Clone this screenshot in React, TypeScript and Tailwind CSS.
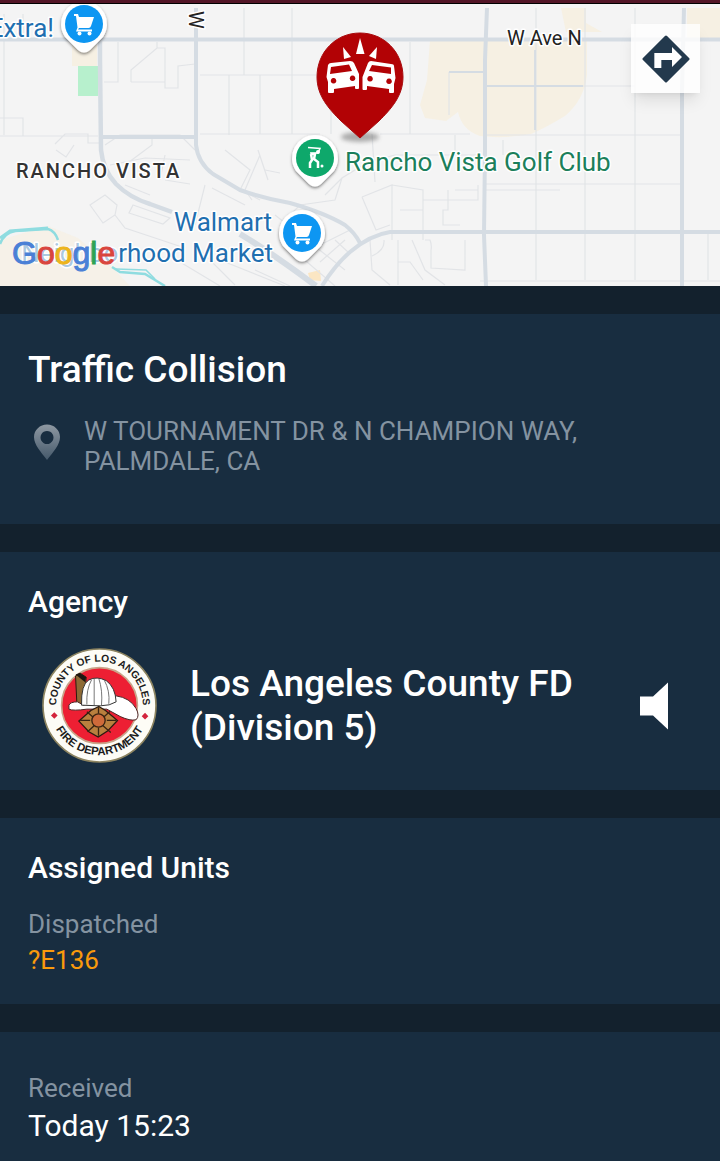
import type { ReactNode } from "react";

const incident = {
  type: "Traffic Collision",
  address: ["W TOURNAMENT DR & N CHAMPION WAY,", "PALMDALE, CA"],
  agency: ["Los Angeles County FD", "(Division 5)"],
  units: [{ status: "Dispatched", names: "?E136" }],
  received: "Today 15:23",
};

// teardrop marker used for the places on the map
function PlacePin({ x, y, color, children }: { x: number; y: number; color: string; children: ReactNode }) {
  return (
    <g transform={`translate(${x} ${y})`}>
      <path
        d="M0 -23A23 23 0 0 1 19 13L6 26Q0 31 -6 26L-19 13A23 23 0 0 1 0 -23Z"
        fill="#fff"
        filter="url(#pinShadow)"
      />
      <circle r="19" fill={color} />
      {children}
    </g>
  );
}

function Cart() {
  return (
    <g fill="#fff">
      <path d="M-10 -10H-6L-5 -7H10L7 2Q6.500 4 4.500 4H-5L-6 5.500H8V7.500H-8L-6.500 3.500L-8 -8H-10Z" />
      <circle cx="-4.500" cy="9.500" r="2" />
      <circle cx="5.500" cy="9.500" r="2" />
    </g>
  );
}

function CollisionPin() {
  return (
    <g>
      <ellipse cx="360" cy="137" rx="19" ry="5" fill="#555" opacity="0.45" filter="url(#soft)" />
      <path
        d="M360 33C384 33 403 52 403 77C403 96 391 109 379 121L360 138L341 121C329 109 317 96 317 77C317 52 336 33 360 33Z"
        fill="#b20205"
        stroke="#a80a0d"
        strokeWidth="1"
      />
      <g fill="#fff">
        <path d="M360 38L364.500 54H356Z" />
        <path d="M343 47L351 57L344 59Z" />
        <path d="M377 47L376 59L369 56Z" />
        <path
          fillRule="evenodd"
          d="M328 65Q329 63 331 63L350 61Q353 61 354 63L359 74V88Q359 89 358 89H356Q355 89 355 88V86L334 89V92Q334 93 333 93H329Q328 93 328 92V82L326.500 77ZM331 67L330 74L352 71L349 64.500ZM333.500 78A2.800 2.800 0 1 0 333.600 78ZM352.500 75.500A2.800 2.800 0 1 0 352.600 75.500Z"
        />
        <path
          fillRule="evenodd"
          d="M368 63Q369 61 371 61L391 64Q394 64 394 66L395.500 78L394 84V92Q394 93 393 93H390Q389 93 389 92V89L367 86V89Q367 90 366 90H363.500Q362.500 90 362.500 89V77ZM372 65L369 71L391 74V67.500ZM370 76A2.800 2.800 0 1 0 370.100 76ZM389 78.500A2.800 2.800 0 1 0 389.100 78.500Z"
        />
      </g>
    </g>
  );
}

function IncidentMap() {
  return (
    <svg viewBox="0 4 720 282" className="block h-auto w-full font-[Roboto,sans-serif]" role="img" aria-label="Map">
      <defs>
        <filter id="pinShadow" x="-30%" y="-30%" width="160%" height="160%">
          <feDropShadow dx="0" dy="1.500" stdDeviation="1.500" floodOpacity="0.5" />
        </filter>
        <filter id="soft" x="-30%" y="-80%" width="160%" height="260%">
          <feGaussianBlur stdDeviation="2" />
        </filter>
      </defs>
      <rect y="4" width="720" height="282" fill="#f4f4f4" />

      {/* land use */}
      <g fill="#f6f0e3">
        <path d="M430 40H587V75Q584 100 565 116Q545 128 531 134Q505 139 480 136Q462 130 458 112L446 121L425 118L420 105L427 80Z" />
        <path d="M561 8H586V23L602 32H566Z" />
        <path d="M687 8H720V38H687Z" />
        <path d="M72 45H97V66H72Z" />
        <path d="M0 240L48 226L78 238L110 265L130 286H0Z" opacity="0.7" />
        <path d="M308 273L320 270L321 281L310 280Z" fill="#fbe6c3" />
      </g>
      <path d="M78 66H98V96H78Z" fill="#b7f0cd" />

      {/* minor streets */}
      <g fill="none" stroke="#e2e4e7" strokeWidth="1.200">
        <path d="M4 14V135M23 14V40M0 118H23V136H0M0 136H98M55 144L65 134H88V143H100" />
        <path d="M104 82H118V42M131 82V70L157 48H165V82H131M165 82V88H178V66L195 64M157 48V42" />
        <path d="M200 75H318M229 75V135M244 8V75M260 75V134M292 8V134M331 110V134M200 134H320M410 42V134M380 134H470" />
        <path d="M450 72L485 72M449 72V115M536 8V280M585 8V280M635 8V280M485 86H635M485 135H680M485 184H680M485 190H560M480 281H720M708 233V280" />
        <path d="M105 145L120 135H180L195 150M110 165L145 158L190 160M125 165L152 145V135M160 180L165 155M165 180L190 184" />
        <path d="M90 205L105 195L117 205L115 215L103 223ZM115 215L125 228L185 248M133 205L170 218L163 224L129 213ZM150 195L125 185" />
        <path d="M205 185L195 225M212 188L245 205M218 178L260 200M225 150L250 170L240 190M260 155L245 190L252 200M258 150L268 180" />
        <path d="M290 215L300 205L335 200L342 178L368 162L395 155H480M342 178L325 195M372 134L375 182M362 197L392 185V240M362 197L376 230L390 225M392 185L423 190V240M423 190V210H400M423 200H478V185M448 190V210H443V225H460" />
        <path d="M425 240H430Q432 245 431 250V268L465 270V240M398 240V285M398 262H410L423 280M412 240L425 270L445 285M370 240L372 270L390 285M384 240Q385 250 372 256" />
        <path d="M275 215L345 270M285 243L335 286M310 250L350 230M320 262L345 240M255 270L290 286M200 250L235 285M180 262L220 286M225 262L285 286M335 240L348 252" />
        <path d="M455 135V155M503 140V155M455 190H478M265 170L280 173M56 150L66 157L74 145" />
      </g>

      {/* main roads */}
      <g fill="none" stroke="#d5dce3" strokeLinejoin="round">
        <path d="M0 39.500H720" strokeWidth="4" />
        <path d="M100 41V60L101 150Q103 170 116 184Q130 198 150 204L172 212" strokeWidth="4.500" />
        <path d="M196 8V145Q198 163 213 174L240 190Q262 198 290 203Q325 213 345 225Q355 233 360 243" strokeWidth="4" />
        <path d="M101 137H196" strokeWidth="4" />
        <path d="M322 286Q335 265 350 252Q370 235 390 232H720" strokeWidth="4" />
        <path d="M240 234Q275 255 316 286" strokeWidth="6" />
        <path d="M487 8L485 60V150L484 235L486 286" strokeWidth="4" />
        <path d="M684 8L682 90V286" strokeWidth="4" />
        <path d="M487 86H583M449 72H485M535 50V130" strokeWidth="1.800" />
      </g>

      {/* aqueduct */}
      <g fill="none" stroke="#8fdce0">
        <path d="M0 244Q4 233 15 231L48 229Q55 231 58 240M112 267L120 272L145 274L165 286" strokeWidth="2.500" />
        <path d="M0 238L10 231L48 228" strokeWidth="3" />
        <path d="M116 269L146 270L155 279" strokeWidth="1.500" />
      </g>

      <PlacePin x={84} y={24} color="#0d96f2">
        <Cart />
      </PlacePin>
      <PlacePin x={302} y={233} color="#0d96f2">
        <Cart />
      </PlacePin>
      <CollisionPin />
      {/* golfer */}
      <PlacePin x={315} y={158} color="#0ea86b">
        <g fill="none" stroke="#fff" strokeWidth="2">
          <path d="M-7 -10.500L5 -9.500L3 -5L-5 -5" strokeWidth="1.500" />
          <path d="M-4 -4H0L-1 1L3 4V10M-4 -4L-3 2L-5 5V10" strokeWidth="2.500" />
          <circle cx="3" cy="-6" r="2" fill="#fff" stroke="none" />
          <circle cx="7" cy="8" r="1.500" fill="#fff" stroke="none" />
        </g>
      </PlacePin>

      {/* labels */}
      <g stroke="#fff" strokeWidth="3" strokeLinejoin="round" paintOrder="stroke" fontSize="26">
        <g fill="#1f6fb0" textAnchor="end">
          <text x="54" y="37">Extra!</text>
          <text x="272" y="231">Walmart</text>
          <text x="273" y="262">
            <tspan fillOpacity="0.4">Neighbo</tspan>rhood Market
          </text>
        </g>
        <text x="345" y="171" fill="#1b7f5b">Rancho Vista Golf Club</text>
        <text x="16" y="178" fill="#333" fontSize="20" fontWeight="500" className="tracking-widest">
          RANCHO VISTA
        </text>
        <text x="507" y="45" fill="#222" fontSize="20">W Ave N</text>
        <text transform="translate(189 11) rotate(90)" fill="#222" fontSize="20">W</text>
      </g>
      <text x="12" y="264" fontSize="32" strokeWidth="1" className="font-['Liberation_Sans',sans-serif]">
        <tspan fill="#4a80d6" stroke="#4a80d6">G</tspan>
        <tspan fill="#d9453d" stroke="#d9453d">o</tspan>
        <tspan fill="#edb41c" stroke="#edb41c">o</tspan>
        <tspan fill="#4a80d6" stroke="#4a80d6">g</tspan>
        <tspan fill="#2fa350" stroke="#2fa350">l</tspan>
        <tspan fill="#d9453d" stroke="#d9453d">e</tspan>
      </text>
    </svg>
  );
}

function AgencySeal() {
  return (
    <svg viewBox="35 22 346 346" className="size-[115px] shrink-0" role="img" aria-label="County of Los Angeles Fire Department">
      <defs>
        <path id="sealTop" d="M82 225A130 130 0 1 1 334 225" />
        <path id="sealBottom" d="M59 195A149 149 0 0 0 357 195" />
      </defs>
      <circle cx="208" cy="195" r="170" fill="#fdfcf6" stroke="#8d8460" strokeWidth="5" />
      <circle cx="208" cy="195" r="114" fill="#ed1f33" stroke="#c9a58a" strokeWidth="5" />
      <g fill="#1b1b1b" fontWeight="700" textAnchor="middle" className="font-['Liberation_Sans',sans-serif]">
        <text fontSize="31">
          <textPath href="#sealTop" startOffset="50%">COUNTY OF LOS ANGELES</textPath>
        </text>
        <text fontSize="34">
          <textPath href="#sealBottom" startOffset="50%">FIRE DEPARTMENT</textPath>
        </text>
      </g>
      <path d="M72 215L82 225L72 235L62 225ZM345 217L355 227L345 237L335 227Z" fill="#d3243c" />

      {/* helmet */}
      <path d="M136 106L150 98L168 110L160 196L140 192Z" fill="#8d6a35" stroke="#2a1b0d" strokeWidth="3" />
      <path d="M136 102L148 97L168 110L164 124Z" fill="#1d1712" />
      <path
        d="M116 194Q120 184 142 184L160 194L258 166Q300 172 318 204Q330 226 318 238Q300 242 270 228L230 206L170 206Q128 212 116 206Z"
        fill="#fff"
        stroke="#4b2323"
        strokeWidth="3"
      />
      <path d="M154 194Q152 132 176 118Q200 106 228 120Q256 140 258 184Q240 196 210 196Z" fill="#fff" stroke="#333" strokeWidth="3" />
      <path d="M170 192Q168 146 184 118M192 194V114M214 194Q218 150 206 114M236 190Q240 150 222 118" fill="none" stroke="#777" strokeWidth="3" />

      {/* badge */}
      <path d="M206 198L226 210L262 240L232 272L204 290L176 274L146 242L182 210Z" fill="#b9803e" stroke="#2c1c10" strokeWidth="4" />
      <path d="M170 214L242 276M240 212L172 274M150 240H180M230 240H258M205 200V220M205 262V286" stroke="#3a2412" strokeWidth="4" />
      <circle cx="205" cy="240" r="20" fill="#cf6a3a" stroke="#3a2412" strokeWidth="4" />
    </svg>
  );
}

function Section({ className, children }: { className: string; children: ReactNode }) {
  return <section className={`bg-[#182d40] px-7 ${className}`}>{children}</section>;
}

export default function App() {
  return (
    <div className="flex min-h-screen flex-col gap-7 bg-[#13212d] font-[Roboto,sans-serif] text-white">
      <header>
        <div className="h-1 border-b border-black bg-[#531627]" />
        <div className="relative">
          <IncidentMap />
          <button
            type="button"
            aria-label="Directions"
            className="absolute top-5 right-5 flex size-[69px] items-center justify-center bg-white/80 shadow-lg"
          >
            <svg viewBox="488 101 144 144" className="size-12" aria-hidden="true">
              <path d="M560 107L626 173L560 239L494 173Z" fill="#23394d" stroke="#23394d" strokeWidth="9" strokeLinejoin="round" />
              <path d="M525 200V155H578V137L608 167L578 197V176H546V200Z" fill="#fff" />
            </svg>
          </button>
        </div>
      </header>

      <Section className="pt-[34px] pb-12">
        <h1 className="text-[37px] leading-11 font-medium">{incident.type}</h1>
        <div className="mt-6 flex items-start gap-6">
          <svg viewBox="0 0 26 36" className="mt-2 ml-1.5 h-9 w-[26px] shrink-0" aria-hidden="true">
            <defs>
              <linearGradient id="pinFade" x1="0" y1="0" x2="0" y2="1">
                <stop offset="0" stopColor="#8e98a2" />
                <stop offset="1" stopColor="#45596b" />
              </linearGradient>
            </defs>
            <path
              fill="url(#pinFade)"
              fillRule="evenodd"
              d="M13 0.500C20 0.500 26 6 26 13C26 21 19 28 13 36C7 28 0 21 0 13C0 6 6 0.500 13 0.500ZM13 7A6.500 6.500 0 1 0 13.010 7Z"
            />
          </svg>
          <address className="text-[26px] leading-[30px] text-[#8493a1] not-italic">
            {incident.address[0]}
            <br />
            {incident.address[1]}
          </address>
        </div>
      </Section>

      <Section className="pt-8 pb-[27px]">
        <h2 className="text-[30px] leading-9 font-medium">Agency</h2>
        <div className="mt-7 flex items-center pr-6 pl-3.5">
          <AgencySeal />
          <p className="ml-[33px] flex-1 text-[37px] leading-11 font-medium">
            {incident.agency[0]}
            <br />
            {incident.agency[1]}
          </p>
          <button type="button" aria-label="Listen">
            <svg viewBox="0 0 28 48" className="h-12 w-7" fill="#fff" aria-hidden="true">
              <path d="M0 14.500H13L28 0.500V47.500L13 33.500H0Z" />
            </svg>
          </button>
        </div>
      </Section>

      <Section className="pt-8 pb-[26px]">
        <h2 className="text-[30px] leading-9 font-medium">Assigned Units</h2>
        {incident.units.map((unit) => (
          <div key={unit.status} className="mt-5 text-[26px] leading-9">
            <p className="text-[#8493a1]">{unit.status}</p>
            <p className="text-[#fa9a0c]">{unit.names}</p>
          </div>
        ))}
      </Section>

      <Section className="flex-1 pt-[38px]">
        <p className="text-[26px] leading-9 text-[#8493a1]">Received</p>
        <p className="text-[30px] leading-10">{incident.received}</p>
      </Section>
    </div>
  );
}
